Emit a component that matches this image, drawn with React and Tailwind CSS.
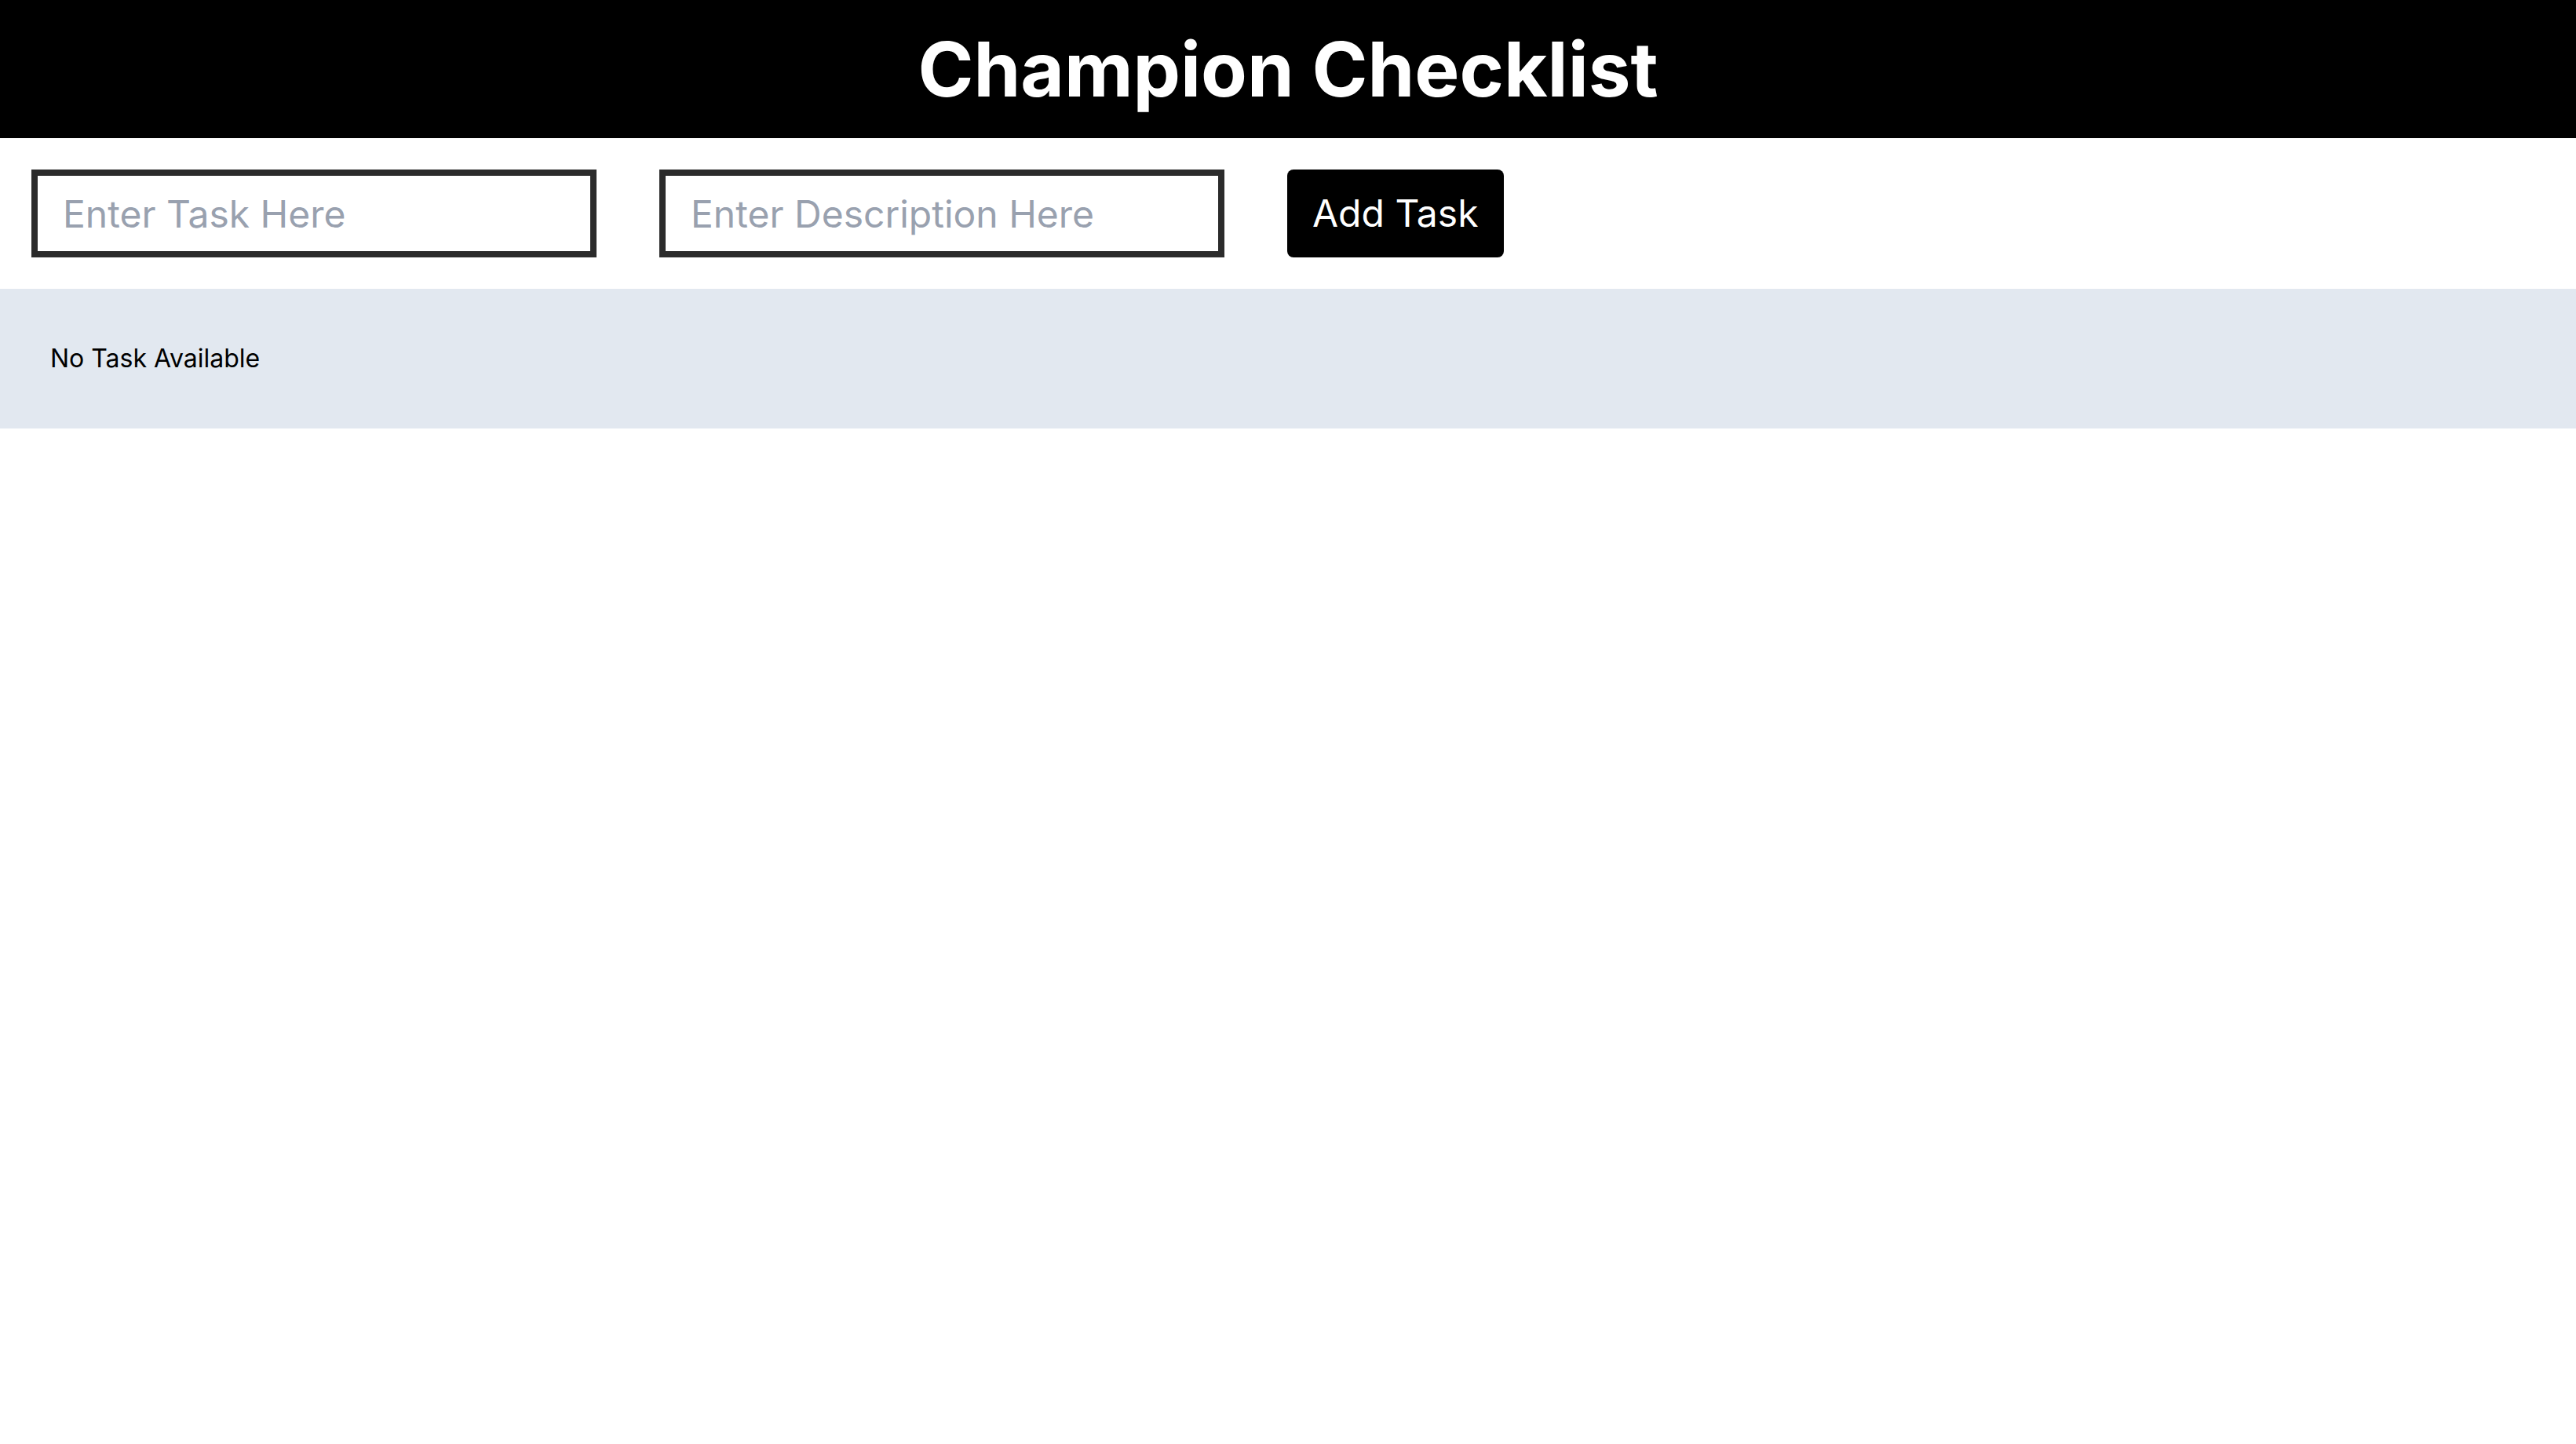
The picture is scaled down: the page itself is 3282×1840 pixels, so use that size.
import { useState } from "react";

function App() {
  const [title, setTitle] = useState("");
  const [desc, setDesc] = useState("");
  const [tasks, setTasks] = useState([]);

  const addTask = (e) => {
    e.preventDefault();
    if (!title.trim()) return;
    setTasks([...tasks, { title, desc }]);
    setTitle("");
    setDesc("");
  };

  return (
    <div className="min-h-screen bg-white font-['Inter',sans-serif]">
      <header className="h-[176px] bg-black flex items-center justify-center">
        <h1 className="text-white text-[96px] font-bold leading-none">Champion Checklist</h1>
      </header>

      <form onSubmit={addTask} className="flex items-center gap-[80px] p-[40px]">
        <input
          type="text"
          value={title}
          onChange={(e) => setTitle(e.target.value)}
          placeholder="Enter Task Here"
          className="w-[720px] h-[112px] border-[8px] border-[#2b2b2b] px-[32px] text-[48px] text-black placeholder:text-gray-400 outline-none"
        />
        <input
          type="text"
          value={desc}
          onChange={(e) => setDesc(e.target.value)}
          placeholder="Enter Description Here"
          className="w-[720px] h-[112px] border-[8px] border-[#2b2b2b] px-[32px] text-[48px] text-black placeholder:text-gray-400 outline-none"
        />
        <button
          type="submit"
          className="h-[112px] px-[32px] bg-black text-white text-[48px] rounded-[8px]"
        >
          Add Task
        </button>
      </form>

      <div className="bg-slate-200 px-[64px] py-[65px]">
        {tasks.length === 0 ? (
          <h2 className="text-[32px] leading-[48px] text-black">No Task Available</h2>
        ) : (
          <ul>
            {tasks.map((t, i) => (
              <li key={i} className="text-[32px] leading-[48px] text-black">
                {t.title} — {t.desc}
              </li>
            ))}
          </ul>
        )}
      </div>
    </div>
  );
}

export default App;
